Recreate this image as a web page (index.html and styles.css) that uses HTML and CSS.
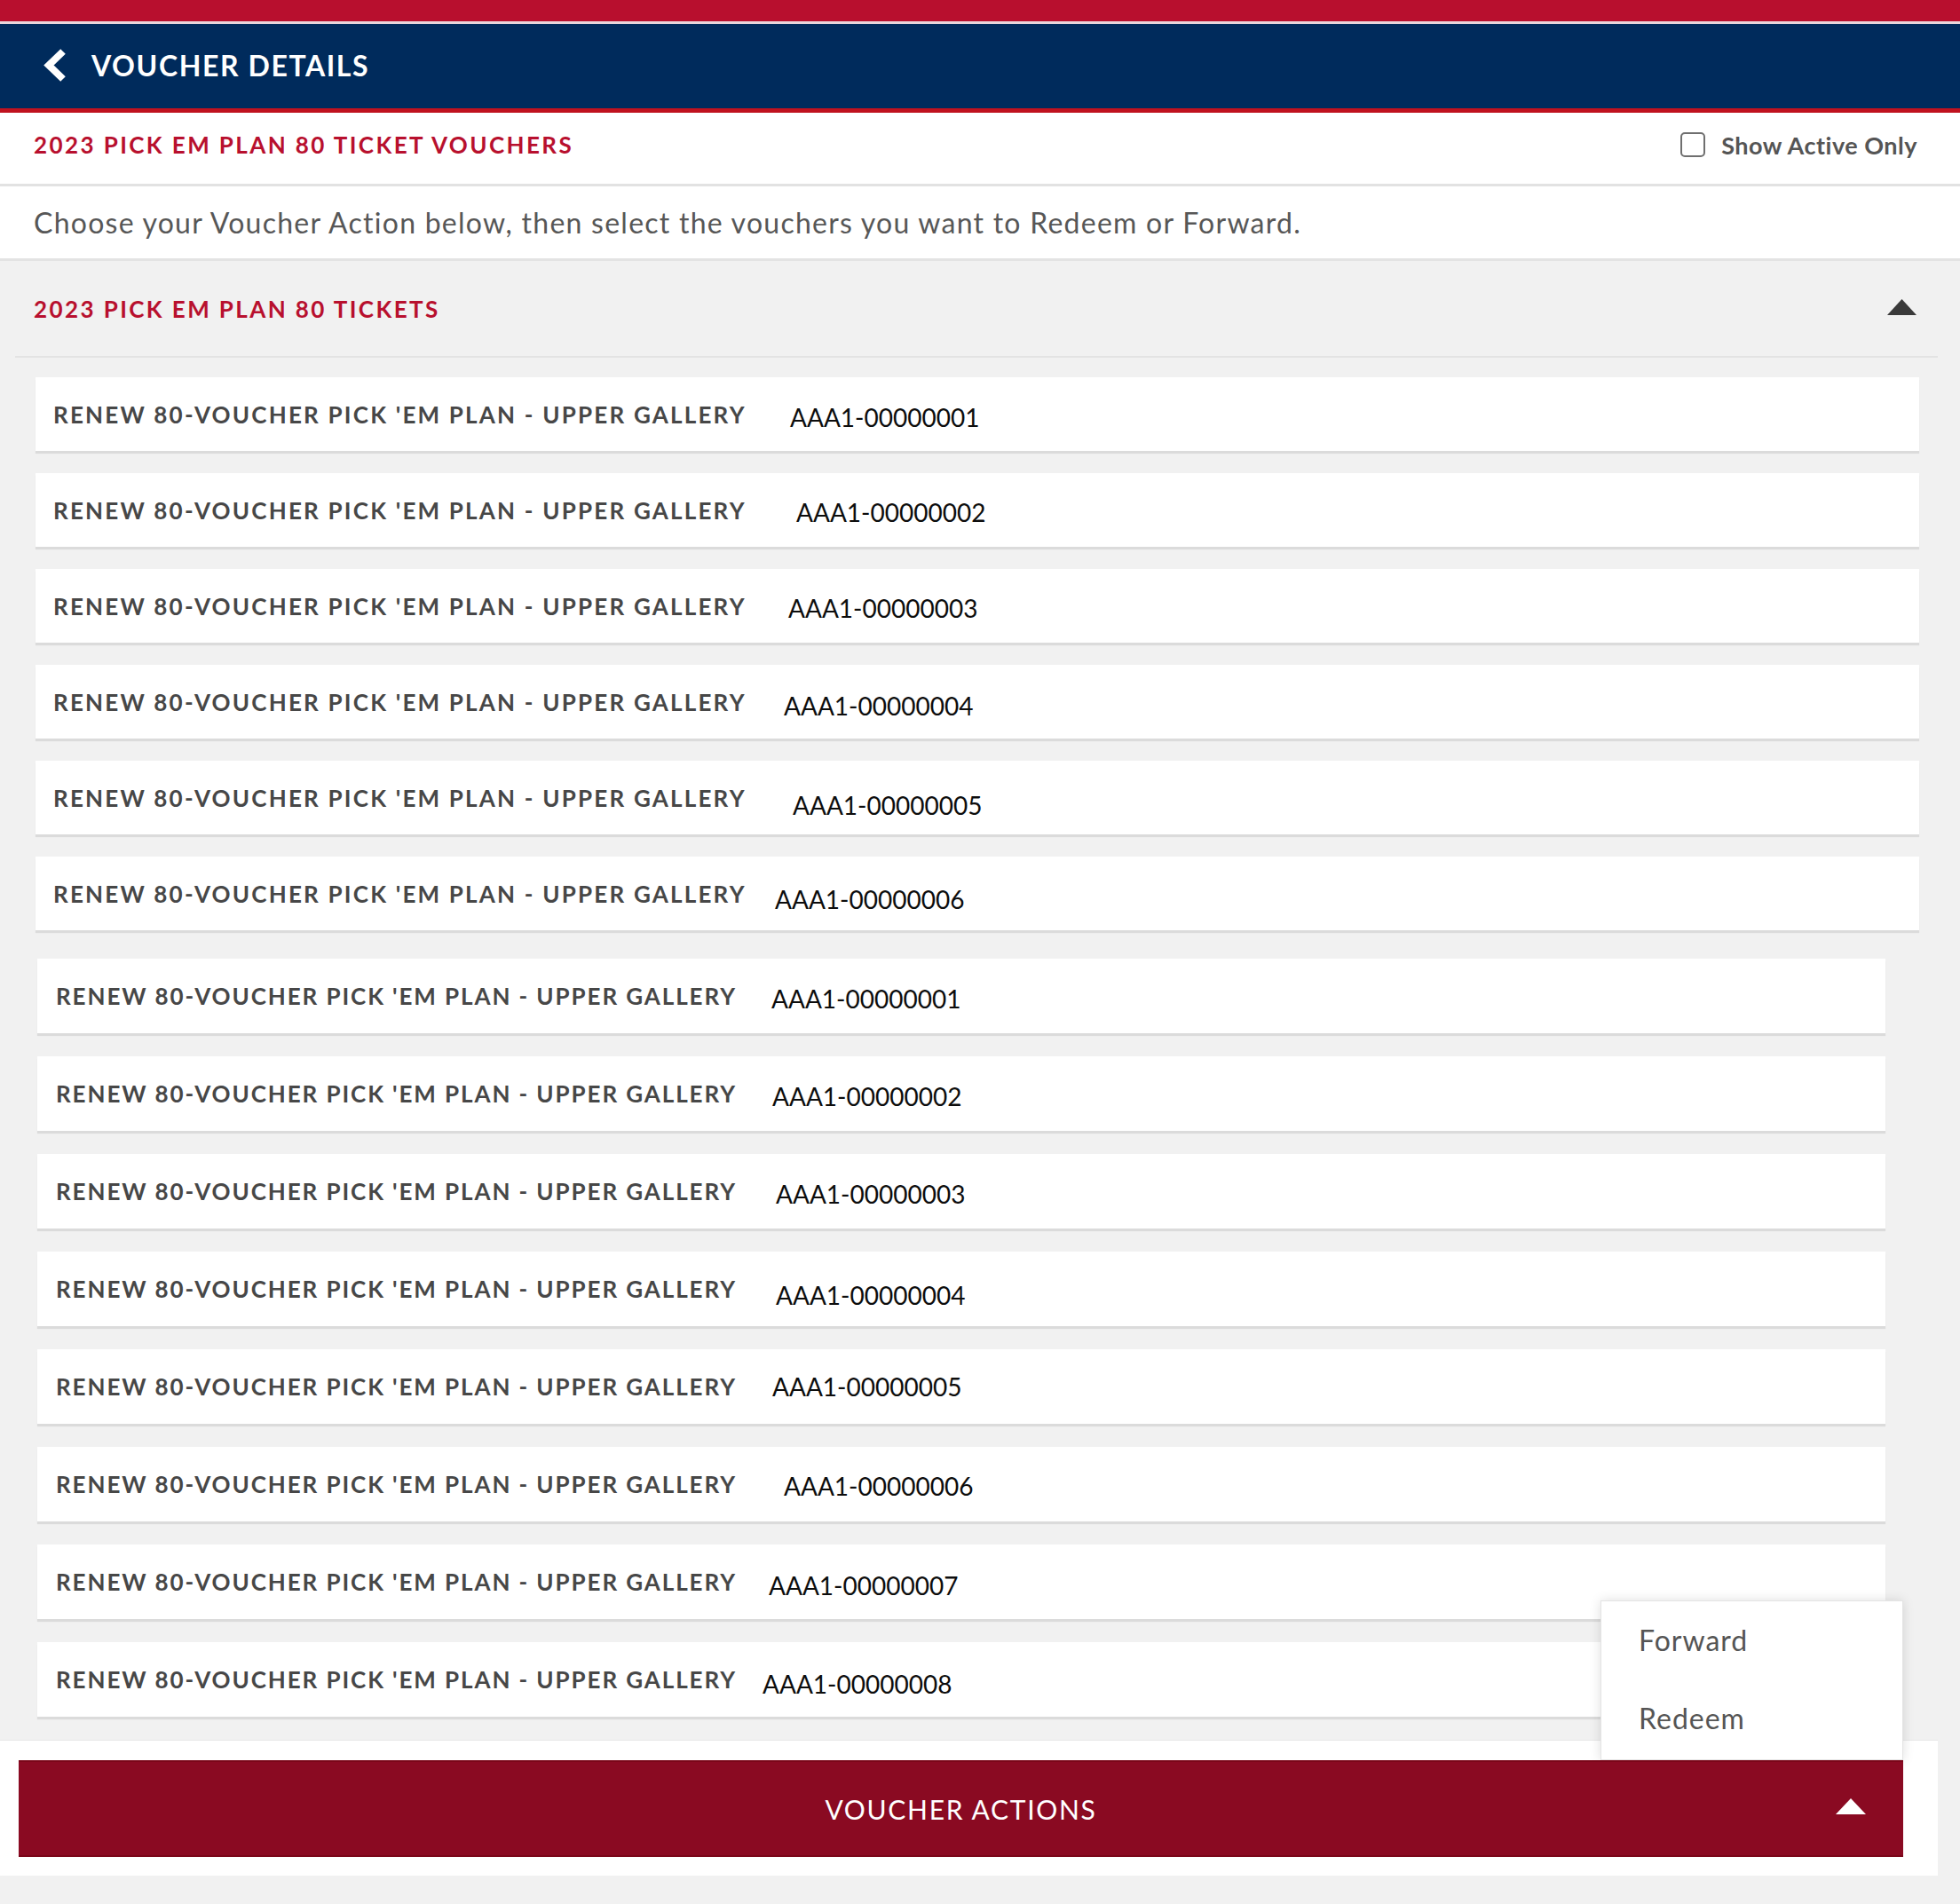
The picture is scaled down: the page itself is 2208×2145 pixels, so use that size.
FILE: index.html
```html
<!DOCTYPE html>
<html lang="en">
<head>
<meta charset="utf-8">
<title>Voucher Details</title>
<link rel="stylesheet" href="styles.css">
</head>
<body>
<div class="page">
  <div class="topbar"></div>
  <header class="header">
    <svg class="back" width="28" height="39" viewBox="0 0 28 39" aria-hidden="true">
      <polyline points="24,4 8,19.5 24,35" fill="none" stroke="#ffffff" stroke-width="8" stroke-linejoin="miter"/>
    </svg>
    <h1 class="header-title">VOUCHER DETAILS</h1>
  </header>

  <div class="titlebar">
    <div class="plan-title">2023 PICK EM PLAN 80 TICKET VOUCHERS</div>
    <label class="active-toggle"><span class="checkbox"></span><span class="toggle-text">Show Active Only</span></label>
  </div>

  <div class="desc">Choose your Voucher Action below, then select the vouchers you want to Redeem or Forward.</div>

  <section class="section">
    <div class="section-head">
      <div class="section-title">2023 PICK EM PLAN 80 TICKETS</div>
      <svg class="caret" width="33" height="18" viewBox="0 0 33 18" aria-hidden="true"><polygon points="0,18 16.5,0 33,18" fill="#3a3a3a"/></svg>
    </div>

    <div class="list list-a">
      <div class="card"><span class="label">RENEW 80-VOUCHER PICK 'EM PLAN - UPPER GALLERY</span><span class="code">AAA1-00000001</span></div>
      <div class="card"><span class="label">RENEW 80-VOUCHER PICK 'EM PLAN - UPPER GALLERY</span><span class="code">AAA1-00000002</span></div>
      <div class="card"><span class="label">RENEW 80-VOUCHER PICK 'EM PLAN - UPPER GALLERY</span><span class="code">AAA1-00000003</span></div>
      <div class="card"><span class="label">RENEW 80-VOUCHER PICK 'EM PLAN - UPPER GALLERY</span><span class="code">AAA1-00000004</span></div>
      <div class="card"><span class="label">RENEW 80-VOUCHER PICK 'EM PLAN - UPPER GALLERY</span><span class="code">AAA1-00000005</span></div>
      <div class="card"><span class="label">RENEW 80-VOUCHER PICK 'EM PLAN - UPPER GALLERY</span><span class="code">AAA1-00000006</span></div>
    </div>

    <div class="list list-b">
      <div class="card"><span class="label">RENEW 80-VOUCHER PICK 'EM PLAN - UPPER GALLERY</span><span class="code">AAA1-00000001</span></div>
      <div class="card"><span class="label">RENEW 80-VOUCHER PICK 'EM PLAN - UPPER GALLERY</span><span class="code">AAA1-00000002</span></div>
      <div class="card"><span class="label">RENEW 80-VOUCHER PICK 'EM PLAN - UPPER GALLERY</span><span class="code">AAA1-00000003</span></div>
      <div class="card"><span class="label">RENEW 80-VOUCHER PICK 'EM PLAN - UPPER GALLERY</span><span class="code">AAA1-00000004</span></div>
      <div class="card"><span class="label">RENEW 80-VOUCHER PICK 'EM PLAN - UPPER GALLERY</span><span class="code">AAA1-00000005</span></div>
      <div class="card"><span class="label">RENEW 80-VOUCHER PICK 'EM PLAN - UPPER GALLERY</span><span class="code">AAA1-00000006</span></div>
      <div class="card"><span class="label">RENEW 80-VOUCHER PICK 'EM PLAN - UPPER GALLERY</span><span class="code">AAA1-00000007</span></div>
      <div class="card"><span class="label">RENEW 80-VOUCHER PICK 'EM PLAN - UPPER GALLERY</span><span class="code">AAA1-00000008</span></div>
    </div>
  </section>

  <footer class="footer">
    <div class="menu">
      <div class="menu-item">Forward</div>
      <div class="menu-item">Redeem</div>
    </div>
    <button class="actions" type="button">
      <span class="actions-text">VOUCHER ACTIONS</span>
      <svg class="actions-caret" width="34" height="18" viewBox="0 0 34 18" aria-hidden="true"><polygon points="0,18 17,0 34,18" fill="#ffffff"/></svg>
    </button>
  </footer>
</div>
</body>
</html>
```

FILE: styles.css
```css
* { box-sizing: border-box; }

html, body {
  margin: 0;
  padding: 0;
  background: #f1f1f1;
}

body {
  font-family: Lato, "Open Sans", "Liberation Sans", sans-serif;
  color: #4a4a4a;
}

.page {
  width: 2208px;
  min-height: 2145px;
  background: #f1f1f1;
}

.topbar {
  height: 27px;
  background: #b80f2e;
  border-bottom: 3px solid #e9d6dc;
}

.header {
  height: 100px;
  background: #002b5c;
  border-bottom: 5px solid #c0121f;
  display: flex;
  align-items: center;
  padding: 0 0 2px 47px;
  gap: 28px;
}

.back { display: block; flex: none; }

.header-title {
  margin: 0;
  color: #ffffff;
  font-size: 32px;
  font-weight: 700;
  letter-spacing: 1.6px;
  line-height: 1;
}

.titlebar {
  height: 83px;
  background: #ffffff;
  border-bottom: 3px solid #e2e2e2;
  display: flex;
  align-items: center;
  justify-content: space-between;
  padding: 0 48px 8px 38px;
}

.plan-title,
.section-title {
  color: #b8102e;
  font-size: 26px;
  font-weight: 700;
  letter-spacing: 2.4px;
}

.active-toggle {
  display: flex;
  align-items: center;
  gap: 18px;
}

.checkbox {
  width: 28px;
  height: 28px;
  border: 2px solid #6f6f6f;
  border-radius: 5px;
  background: #ffffff;
}

.toggle-text {
  font-size: 27px;
  font-weight: 700;
  color: #555555;
  letter-spacing: 0.5px;
}

.desc {
  height: 84px;
  background: #ffffff;
  border-bottom: 3px solid #e3e3e3;
  display: flex;
  align-items: center;
  padding-left: 38px;
  font-size: 32px;
  color: #575757;
  letter-spacing: 1.25px;
}

.section {
  margin: 0 25px 0 17px;
}

.section-head {
  height: 109px;
  border-bottom: 2px solid #e3e3e3;
  display: flex;
  align-items: center;
  justify-content: space-between;
  padding: 0 24px 0 21px;
}

.caret { display: block; margin-top: -4px; }

.list {
  display: flex;
  flex-direction: column;
}

.list-a {
  padding: 22px 21px 0 23px;
  gap: 25px;
}

.list-b {
  padding: 32px 59px 26px 25px;
  gap: 26px;
}

.card {
  background: #ffffff;
  display: flex;
  align-items: center;
  box-shadow: 0 3px 1px rgba(0, 0, 0, 0.09);
}

.list-a .card { height: 83px; padding-left: 20px; }
.list-b .card { height: 84px; padding-left: 21px; }

.label {
  flex: none;
  font-size: 26px;
  font-weight: 700;
  color: #474747;
}

.list-a .label { width: 830px; letter-spacing: 2.2px; }
.list-b .label { width: 806px; letter-spacing: 1.9px; }

.code {
  font-family: Lato, "Liberation Sans", sans-serif;
  font-size: 28px;
  color: #0d0d0d;
  margin-top: 6px;
}

.list-a .card:nth-child(2) .code { margin-left: 7px; margin-top: 4px; }
.list-a .card:nth-child(3) .code { margin-left: -2px; margin-top: 4px; }
.list-a .card:nth-child(4) .code { margin-left: -7px; margin-top: 8px; }
.list-a .card:nth-child(5) .code { margin-left: 3px; margin-top: 16px; }
.list-a .card:nth-child(6) .code { margin-left: -17px; margin-top: 12px; }

.list-b .card:nth-child(2) .code { margin-left: 1px; }
.list-b .card:nth-child(3) .code { margin-left: 5px; }
.list-b .card:nth-child(4) .code { margin-left: 5px; margin-top: 14px; }
.list-b .card:nth-child(5) .code { margin-left: 1px; margin-top: 0; }
.list-b .card:nth-child(6) .code { margin-left: 14px; margin-top: 4px; }
.list-b .card:nth-child(7) .code { margin-left: -3px; margin-top: 8px; }
.list-b .card:nth-child(8) .code { margin-left: -10px; margin-top: 10px; }

.footer {
  position: relative;
  width: 2183px;
  background: #ffffff;
  border-top: 1px solid #e8e8e8;
  padding: 22px 39px 21px 21px;
}

.menu {
  position: absolute;
  left: 1803px;
  top: -158px;
  width: 341px;
  height: 180px;
  background: #ffffff;
  border: 1px solid #e4e4e4;
  box-shadow: 0 0 12px rgba(0, 0, 0, 0.13);
  padding: 22px 0 0 42px;
  z-index: 1;
}

.menu-item {
  font-size: 32px;
  color: #555555;
  height: 88px;
  line-height: 44px;
  letter-spacing: 1px;
}

.actions {
  position: relative;
  z-index: 2;
  width: 100%;
  height: 109px;
  margin: 0;
  border: 0;
  border-top: 2px solid #7b0619;
  border-bottom: 2px solid #7b0619;
  background: #8a0a22;
  display: flex;
  align-items: center;
  justify-content: center;
  font-family: Lato, "Open Sans", sans-serif;
  cursor: pointer;
}

.actions-text {
  color: #ffffff;
  font-size: 30px;
  font-weight: 400;
  letter-spacing: 1.7px;
}

.actions-caret {
  position: absolute;
  right: 42px;
  top: 41px;
}
```
